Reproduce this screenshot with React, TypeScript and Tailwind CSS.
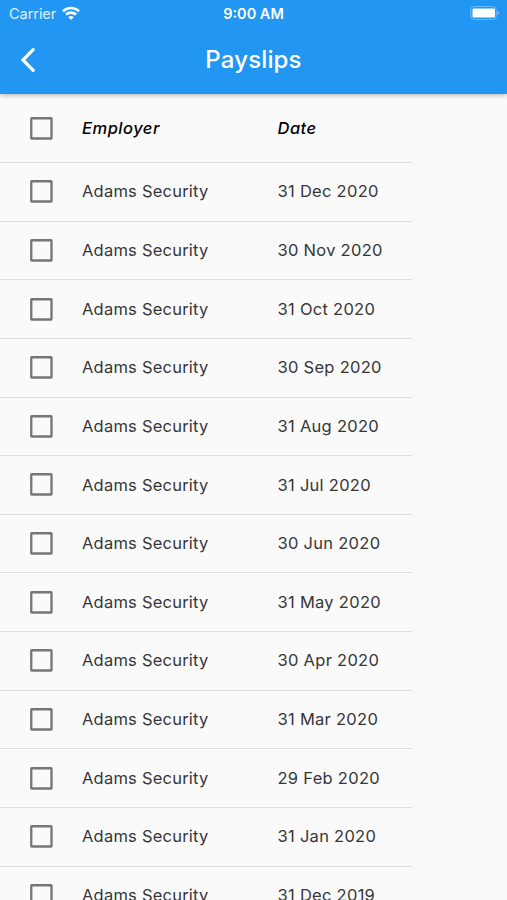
import React from 'react';

const PAYSLIPS = [
  '31 Dec 2020',
  '30 Nov 2020',
  '31 Oct 2020',
  '30 Sep 2020',
  '31 Aug 2020',
  '31 Jul 2020',
  '30 Jun 2020',
  '31 May 2020',
  '30 Apr 2020',
  '31 Mar 2020',
  '29 Feb 2020',
  '31 Jan 2020',
  '31 Dec 2019',
].map((date) => ({ employer: 'Adams Security', date }));

function Checkbox() {
  return (
    <svg className="h-[23px] w-[23px] shrink-0" viewBox="0 0 23 23" fill="none">
      <rect x="1.25" y="1.25" width="20.25" height="20.25" rx="0.4" stroke="#757575" strokeWidth="2.3" />
    </svg>
  );
}

function StatusBar() {
  return (
    <div className="grid h-7 grid-cols-3 items-center pl-[9px] pr-[7px] text-white">
      <div className="flex items-center gap-1.5">
        <span className="text-[14.5px] tracking-[-0.05px] text-white/85">Carrier</span>
        <svg className="-mt-0.5 h-[14px] w-[18px]" viewBox="0 0 18 14" fill="none" stroke="currentColor" strokeWidth="2.6">
          <path d="M1 5.2a11.5 11.5 0 0 1 16 0" />
          <path d="M4 8.6a7.2 7.2 0 0 1 10 0" />
          <path d="M9 14 6.3 11.2a4 4 0 0 1 5.4 0Z" fill="currentColor" stroke="none" />
        </svg>
      </div>
      <span className="pr-0.5 text-center text-[14.5px] font-semibold">9:00 AM</span>
      <svg className="-mt-0.5 h-[14px] w-[30px] justify-self-end" viewBox="0 0 30 14" fill="none">
        <rect x="0.75" y="0.5" width="25.5" height="13" rx="3.5" stroke="white" strokeOpacity="0.35" />
        <rect x="2.5" y="2.5" width="22.5" height="9" rx="1.2" fill="white" />
        <path d="M27.5 5v4c1-.4 1.6-1.1 1.6-2s-.6-1.6-1.6-2Z" fill="white" fillOpacity="0.4" />
      </svg>
    </div>
  );
}

export default function App() {
  return (
    <div className="flex h-[900px] w-[507px] flex-col overflow-hidden bg-[#fafafa] font-['Inter',sans-serif]">
      {/* App bar */}
      <header className="relative h-[94px] shrink-0 bg-[#2196f3] shadow-[0_1px_5px_rgba(0,0,0,0.3)]">
        <StatusBar />
        <div className="grid h-16 grid-cols-[1fr_auto_1fr] items-center px-5 text-white">
          <svg
            className="h-[26px] w-4"
            viewBox="0 0 16 26"
            fill="none"
            stroke="currentColor"
            strokeWidth="3.2"
            strokeLinecap="round"
          >
            <path d="M13.2 2.7 3 13l10.200 10.300" />
          </svg>
          <h1 className="text-2xl font-medium tracking-[0.15px]">Payslips</h1>
        </div>
      </header>

      {/* Payslip table */}
      <main className="w-[412px]">
        <div className="flex h-[69px] items-center border-b border-[#dedede] pl-[30px] text-[16.5px] font-medium italic tracking-[0.5px] text-black">
          <Checkbox />
          <span className="ml-[29px] w-[195.5px]">Employer</span>
          <span>Date</span>
        </div>
        {PAYSLIPS.map((p) => (
          <div key={p.date} className="flex h-[58.64px] items-center border-b border-[#dedede] pl-[30px] text-[16.5px] text-[#363636]">
            <Checkbox />
            <span className="ml-[29px] w-[195.5px] tracking-[0.22px]">{p.employer}</span>
            <span className="tracking-[0.28px]">{p.date}</span>
          </div>
        ))}
      </main>
    </div>
  );
}
